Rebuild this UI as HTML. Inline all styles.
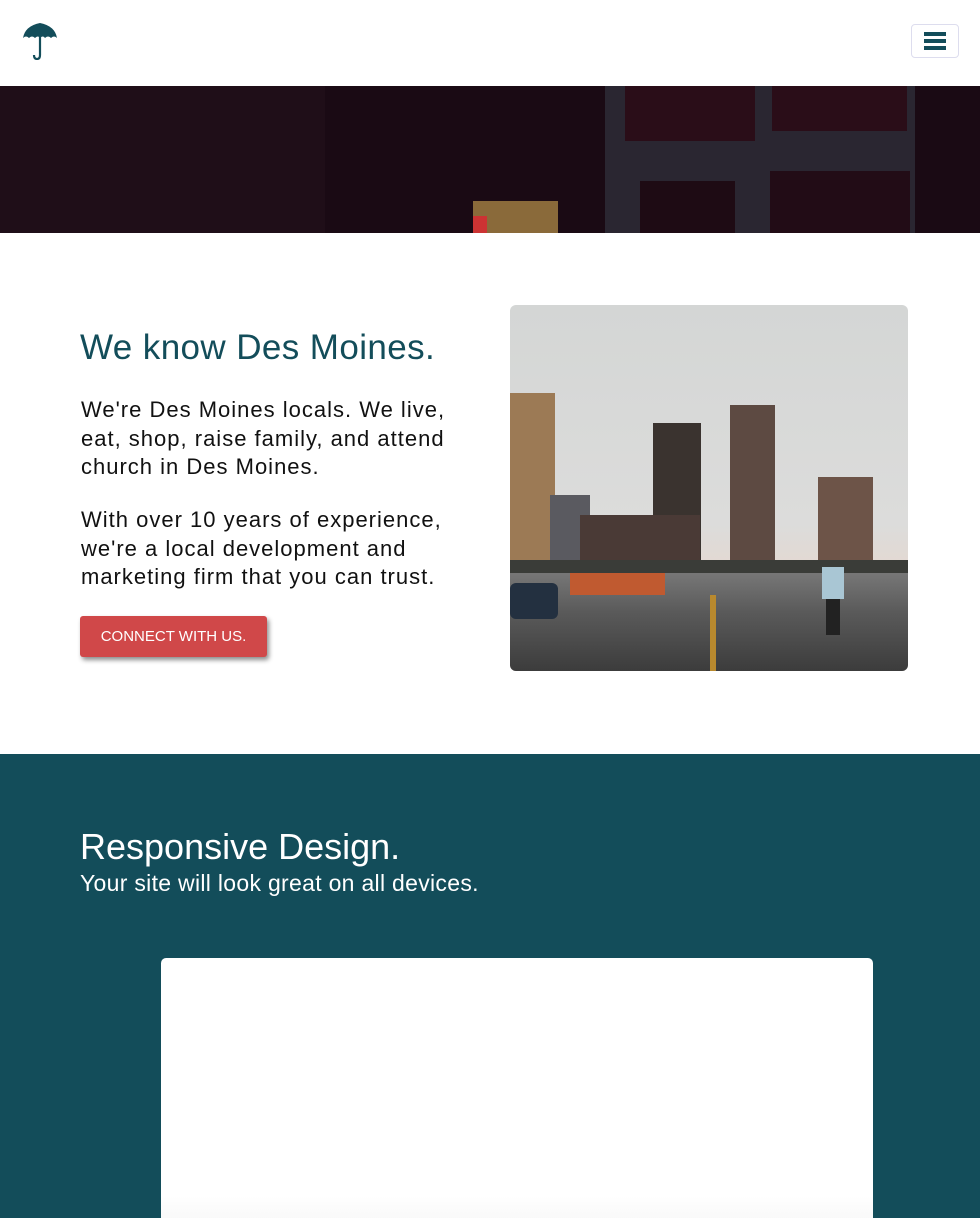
<!DOCTYPE html>
<html><head><meta charset="utf-8"><style>
*{margin:0;padding:0;box-sizing:border-box}
html,body{width:980px;height:1218px;overflow:hidden}
body{font-family:"Liberation Sans",sans-serif;background:#fff;position:relative}
.hdr{position:absolute;left:0;top:0;width:980px;height:86px;background:#fff}
.burger{position:absolute;left:911px;top:24px;width:48px;height:34px;border:1px solid #dde;border-radius:4px}
.burger i{position:absolute;left:12px;width:22px;height:4px;background:#134d5a}
.hero{position:absolute;left:0;top:86px;width:980px;height:147px;background:#1a0a14;overflow:hidden}
.hero div{position:absolute}
h1{position:absolute;left:80px;top:328px;font-size:35px;font-weight:normal;color:#134d5a;letter-spacing:0.4px}
p.t{position:absolute;left:81px;font-size:22px;line-height:28.5px;color:#111;white-space:nowrap;letter-spacing:1px}
.btn{position:absolute;left:80px;top:616px;width:187px;height:41px;background:#d04849;border-radius:3px;color:#fff;font-size:15px;line-height:41px;text-align:center;box-shadow:2px 3px 5px rgba(0,0,0,.45)}
.photo{position:absolute;left:510px;top:305px;width:398px;height:366px;border-radius:6px;overflow:hidden;background:linear-gradient(#d4d6d5 0%,#dcdcdb 60%,#e2d9d3 70%)}
.photo div{position:absolute}
.sec{position:absolute;left:0;top:754px;width:980px;height:464px;background:#134d5a;overflow:hidden}
.sec h2{position:absolute;left:80px;top:72px;font-size:36px;font-weight:normal;color:#fff}
.sec p{position:absolute;left:80px;top:116px;font-size:23px;color:#fff;letter-spacing:0.3px}
.card{position:absolute;left:161px;top:204px;width:712px;height:280px;background:linear-gradient(#fff 85%,#f4f4f4);border-radius:5px}
</style></head><body>
<div class="hdr">
<svg style="position:absolute;left:22px;top:22px" width="36" height="38" viewBox="0 0 36 38"><path d="M18 1 Q3 4 1 16 Q4 13 7 16 Q10 13 13 16 Q16 13 18 16 Q21 13 23 16 Q26 13 29 16 Q32 13 35 16 Q33 4 18 1Z" fill="#134d5a"/><path d="M18 15 V33 Q18 37 15 37 Q12 37 12 33" stroke="#134d5a" stroke-width="2.2" fill="none"/></svg>
<div class="burger"><i style="top:7px"></i><i style="top:14px"></i><i style="top:21px"></i></div>
</div>
<div class="hero">
<div style="left:0;top:0;width:325px;height:147px;background:#1f0e18"></div>
<div style="left:605px;top:0;width:310px;height:147px;background:#2a2631"></div>
<div style="left:625px;top:0;width:130px;height:55px;background:#2a0d18"></div>
<div style="left:772px;top:0;width:135px;height:45px;background:#2a0d18"></div>
<div style="left:640px;top:95px;width:95px;height:52px;background:#1e0b14"></div>
<div style="left:770px;top:85px;width:140px;height:62px;background:#220c16"></div>
<div style="left:473px;top:115px;width:85px;height:32px;background:#8a6a3a"></div>
<div style="left:473px;top:130px;width:14px;height:17px;background:#c33"></div>
</div>
<h1>We know Des Moines.</h1>
<p class="t" style="top:396px">We're Des Moines locals. We live,<br>eat, shop, raise family, and attend<br>church in Des Moines.</p>
<p class="t" style="top:506px">With over 10 years of experience,<br>we're a local development and<br>marketing firm that you can trust.</p>
<div class="btn">CONNECT WITH US.</div>
<div class="photo">
<div style="left:0;top:88px;width:45px;height:200px;background:#9c7a55"></div>
<div style="left:40px;top:190px;width:40px;height:90px;background:#5a5a60"></div>
<div style="left:143px;top:118px;width:48px;height:160px;background:#3a332f"></div>
<div style="left:220px;top:100px;width:45px;height:180px;background:#5d4a42"></div>
<div style="left:308px;top:172px;width:55px;height:90px;background:#6d5448"></div>
<div style="left:70px;top:210px;width:120px;height:60px;background:#4a3a36"></div>
<div style="left:0;top:255px;width:398px;height:30px;background:#3a3c38"></div>
<div style="left:0;top:268px;width:398px;height:98px;background:linear-gradient(#777 0%,#5a5a5a 40%,#3c3c3c 100%)"></div>
<div style="left:0;top:278px;width:48px;height:36px;background:#233040;border-radius:6px"></div>
<div style="left:60px;top:268px;width:95px;height:22px;background:#c05a30"></div>
<div style="left:200px;top:290px;width:6px;height:76px;background:#b8892e"></div>
<div style="left:312px;top:262px;width:22px;height:32px;background:#a9c6d4"></div>
<div style="left:316px;top:294px;width:14px;height:36px;background:#222"></div>
</div>
<div class="sec">
<h2>Responsive Design.</h2>
<p>Your site will look great on all devices.</p>
<div class="card"></div>
</div>
</body></html>
